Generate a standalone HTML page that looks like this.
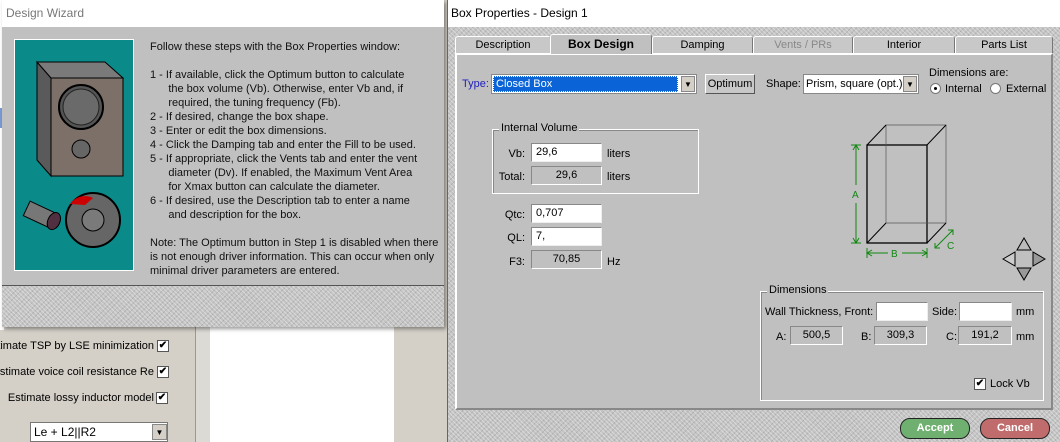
<!DOCTYPE html>
<html><head><meta charset="utf-8"><style>
*{margin:0;padding:0;box-sizing:border-box}
body{width:1060px;height:442px;overflow:hidden;position:relative;background:#d4d0c8;font-family:"Liberation Sans",Arial,sans-serif;font-size:11px;color:#000}
.a{position:absolute}
.tex{background:#c4c4c4;background-image:repeating-linear-gradient(45deg,rgba(255,255,255,.35) 0 1px,transparent 1px 3px),repeating-linear-gradient(-45deg,rgba(0,0,0,.10) 0 1px,transparent 1px 4px)}
.inp{position:absolute;background:#fff;border:1px solid #888;border-right-color:#eee;border-bottom-color:#eee;height:19px;padding:2px 4px;font-size:11px}
.ro{position:absolute;background:#c0c0c0;border:1px solid #888;border-right-color:#fff;border-bottom-color:#fff;height:19px;text-align:center;padding-top:2px}
.tab{position:absolute;top:36px;height:17px;background:#c8c8c8;border:1px solid #fff;border-bottom:none;border-right-color:#777;text-align:center;padding-top:2px;border-radius:3px 3px 0 0}
.grp{position:absolute;border:1px solid #fff;box-shadow:inset 1px 1px 0 #888}
.gl{position:absolute;background:#c0c0c0;padding:0 2px;top:-8px;left:6px}
.chk{position:absolute;width:12px;height:12px;background:#fff;border:1px solid #555;font-size:10px;line-height:10px;text-align:center;font-weight:bold}
.lbl{position:absolute;white-space:nowrap;font-size:11px;text-align:right;right:906px}
</style></head><body>
<div class="a" style="left:195px;top:0;width:1px;height:442px;background:#999"></div>
<div class="a" style="left:196px;top:0;width:14px;height:442px;background:#dcdad5"></div>
<div class="a" style="left:210px;top:0;width:184px;height:442px;background:#fff"></div>
<div class="a" style="left:0;top:0;width:4px;height:330px;background:#fff"></div>
<div class="a" style="left:0;top:108px;width:4px;height:20px;background:#7b9bd6"></div>
<div class="lbl" style="top:340px">stimate TSP by LSE minimization</div>
<div class="lbl" style="top:366px">Estimate voice coil resistance Re</div>
<div class="lbl" style="top:392px">Estimate lossy inductor model</div>
<div class="chk" style="left:157px;top:340px">✔</div>
<div class="chk" style="left:157px;top:366px">✔</div>
<div class="chk" style="left:156px;top:392px">✔</div>
<div class="a" style="left:30px;top:422px;width:138px;height:20px;background:#fff;border:1px solid #777;font-size:12px;padding:2px 3px">Le + L2||R2</div>
<div class="a" style="left:152px;top:424px;width:15px;height:16px;background:#d4d0c8;border:1px solid #888;font-size:8px;text-align:center;line-height:15px">▼</div>

<div class="a" style="left:2px;top:0;width:442px;height:327px;background:#c0c0c0;box-shadow:2px 2px 4px rgba(0,0,0,.4)">
 <div class="a" style="left:0;top:0;width:442px;height:27px;background:#fff;color:#777;font-size:12px;padding:6px 4px">Design Wizard</div>
 <div class="a tex" style="left:0;top:285px;width:442px;height:42px;border-top:1px solid #555"></div>
 <div class="a" style="left:12px;top:39px;width:120px;height:232px;background:#0b8a8a;border:1px solid #fff">
  <svg width="120" height="232" viewBox="0 0 120 232">
   <polygon points="22,22 36,38 36,136 22,120" fill="#5a5a5a" stroke="#000"/>
   <polygon points="22,22 90,22 108,38 36,38" fill="#7a7a7a" stroke="#000"/>
   <rect x="36" y="38" width="72" height="98" fill="#7c7068" stroke="#000"/>
   <circle cx="66" cy="67" r="22" fill="#555" stroke="#000" stroke-width="2"/>
   <circle cx="66" cy="67" r="18" fill="#6a6a6a" stroke="#222"/>
   <circle cx="66" cy="109" r="9" fill="#666" stroke="#000"/>
   <circle cx="78" cy="180" r="27" fill="#666" stroke="#000" stroke-width="2"/>
   <path d="M55,164 A18,18 0 0 1 78,158 L70,165Z" fill="#c00"/>
   <circle cx="78" cy="180" r="11" fill="#7a7a7a" stroke="#000"/>
   <g transform="rotate(25 28 176)"><rect x="10" y="168" width="30" height="16" fill="#777" stroke="#000"/><ellipse cx="40" cy="176" rx="6" ry="9" fill="#503040" stroke="#000"/></g>
  </svg>
 </div>
 <div class="a" style="left:148px;top:40px;width:290px;line-height:14px;font-size:11px;color:#111;white-space:pre">Follow these steps with the Box Properties window:

1 - If available, click the Optimum button to calculate
      the box volume (Vb). Otherwise, enter Vb and, if
      required, the tuning frequency (Fb).
2 - If desired, change the box shape.
3 - Enter or edit the box dimensions.
4 - Click the Damping tab and enter the Fill to be used.
5 - If appropriate, click the Vents tab and enter the vent
      diameter (Dv). If enabled, the Maximum Vent Area
      for Xmax button can calculate the diameter.
6 - If desired, use the Description tab to enter a name
      and description for the box.

Note: The Optimum button in Step 1 is disabled when there
is not enough driver information. This can occur when only
minimal driver parameters are entered.</div>
</div>

<div class="a tex" style="left:447px;top:0;width:613px;height:442px;border-left:1px solid #666"></div>
<div class="a" style="left:448px;top:0;width:612px;height:27px;background:#fff;font-size:12px;padding:6px 3px">Box Properties - Design 1</div>
<div class="tab" style="left:455px;width:96px">Description</div>
<div class="tab" style="left:550px;width:102px;top:34px;height:20px;background:#c0c0c0;font-weight:bold;font-size:12px;z-index:2">Box Design</div>
<div class="tab" style="left:652px;width:101px">Damping</div>
<div class="tab" style="left:753px;width:100px;color:#888">Vents / PRs</div>
<div class="tab" style="left:853px;width:102px">Interior</div>
<div class="tab" style="left:955px;width:98px">Parts List</div>
<div class="a" style="left:455px;top:53px;width:598px;height:357px;background:#c0c0c0;border:2px solid #fff;border-right-color:#888;border-bottom-color:#888"></div>

<div class="a" style="left:462px;top:78px;color:#2020c0">Type:</div>
<div class="a" style="left:491px;top:74px;width:206px;height:20px;background:#fff;border:1px solid #888;padding:1px"><div style="background:#0a64d8;color:#fff;height:16px;width:185px;padding:1px 2px;border:1px dotted #fff">Closed Box</div></div>
<div class="a" style="left:681px;top:76px;width:14px;height:16px;background:#d4d0c8;border:1px solid #888;font-size:8px;text-align:center;line-height:15px">▼</div>
<div class="a" style="left:705px;top:74px;width:50px;height:20px;background:#c8c8c8;border:1px solid #fff;border-right-color:#555;border-bottom-color:#555;text-align:center;padding-top:3px">Optimum</div>
<div class="a" style="left:766px;top:78px">Shape:</div>
<div class="a" style="left:803px;top:74px;width:116px;height:20px;background:#fff;border:1px solid #888;padding:3px 2px">Prism, square (opt.)</div>
<div class="a" style="left:903px;top:76px;width:14px;height:16px;background:#d4d0c8;border:1px solid #888;font-size:8px;text-align:center;line-height:15px">▼</div>
<div class="a" style="left:929px;top:67px">Dimensions are:</div>
<div class="a" style="left:930px;top:83px;width:11px;height:11px;border-radius:50%;background:#fff;border:1px solid #777"><div style="width:3px;height:3px;background:#000;border-radius:50%;margin:3px"></div></div>
<div class="a" style="left:945px;top:83px">Internal</div>
<div class="a" style="left:990px;top:83px;width:11px;height:11px;border-radius:50%;background:#fff;border:1px solid #777"></div>
<div class="a" style="left:1006px;top:83px">External</div>

<div class="grp" style="left:492px;top:129px;width:207px;height:65px"><div class="gl">Internal Volume</div></div>
<div class="a" style="left:480px;top:148px;width:45px;text-align:right">Vb:</div>
<div class="inp" style="left:531px;top:143px;width:71px">29,6</div>
<div class="a" style="left:607px;top:148px">liters</div>
<div class="a" style="left:480px;top:171px;width:45px;text-align:right">Total:</div>
<div class="ro" style="left:531px;top:166px;width:71px">29,6</div>
<div class="a" style="left:607px;top:171px">liters</div>
<div class="a" style="left:480px;top:209px;width:45px;text-align:right">Qtc:</div>
<div class="inp" style="left:531px;top:204px;width:71px">0,707</div>
<div class="a" style="left:480px;top:232px;width:45px;text-align:right">QL:</div>
<div class="inp" style="left:531px;top:227px;width:71px">7,</div>
<div class="a" style="left:480px;top:256px;width:45px;text-align:right">F3:</div>
<div class="ro" style="left:531px;top:250px;width:71px">70,85</div>
<div class="a" style="left:607px;top:256px">Hz</div>

<svg class="a" style="left:840px;top:110px" width="210" height="180" viewBox="0 0 210 180">
 <g fill="none" stroke="#000">
  <rect x="27" y="35" width="60" height="98" stroke-width="1.3"/>
  <path d="M46,15 H106 V113 H46 Z" stroke="#555" stroke-width=".7"/>
  <path d="M27,35 L46,15 M87,35 L106,15 M87,133 L106,113 M27,133 L46,113" stroke-width="1"/>
 </g>
 <g stroke="#118811" fill="none" stroke-width="1">
  <path d="M16,35 V75 M16,93 V133 M11,35 H21 M11,133 H21 M13,40 L16,35 L19,40 M13,128 L16,133 L19,128"/>
  <path d="M27,138 V148 M87,138 V148 M27,143 H48 M62,143 H87 M32,140 L27,143 L32,146 M82,140 L87,143 L82,146"/>
  <path d="M95,138 L113,120 M95,133 V138 H100 M108,120 H113 V125"/>
 </g>
 <g fill="#118811" font-size="10" font-family="Liberation Sans"><text x="12" y="88">A</text><text x="51" y="147">B</text><text x="107" y="139">C</text></g>
 <g stroke="#000" stroke-width="1">
  <polygon points="184,128 191,140 177,140" fill="#bbb"/>
  <polygon points="184,170 191,158 177,158" fill="#999"/>
  <polygon points="163,149 175,142 175,156" fill="#ccc"/>
  <polygon points="205,149 193,142 193,156" fill="#999"/>
 </g>
</svg>

<div class="grp" style="left:760px;top:291px;width:284px;height:110px"><div class="gl">Dimensions</div></div>
<div class="a" style="left:765px;top:306px">Wall Thickness, Front:</div>
<div class="inp" style="left:876px;top:302px;width:52px"></div>
<div class="a" style="left:932px;top:306px">Side:</div>
<div class="inp" style="left:959px;top:302px;width:53px"></div>
<div class="a" style="left:1016px;top:306px">mm</div>
<div class="a" style="left:776px;top:331px">A:</div>
<div class="ro" style="left:790px;top:326px;width:53px">500,5</div>
<div class="a" style="left:861px;top:331px">B:</div>
<div class="ro" style="left:874px;top:326px;width:53px">309,3</div>
<div class="a" style="left:946px;top:331px">C:</div>
<div class="ro" style="left:958px;top:326px;width:54px">191,2</div>
<div class="a" style="left:1016px;top:331px">mm</div>
<div class="chk" style="left:974px;top:378px">✔</div>
<div class="a" style="left:990px;top:378px">Lock Vb</div>

<div class="a" style="left:900px;top:418px;width:70px;height:21px;border-radius:10px;background:#6fb070;border:1px solid #222;color:#fff;font-weight:bold;text-align:center;padding-top:3px">Accept</div>
<div class="a" style="left:980px;top:418px;width:70px;height:21px;border-radius:10px;background:#c06c6c;border:1px solid #222;color:#fff;font-weight:bold;text-align:center;padding-top:3px">Cancel</div>
</body></html>
